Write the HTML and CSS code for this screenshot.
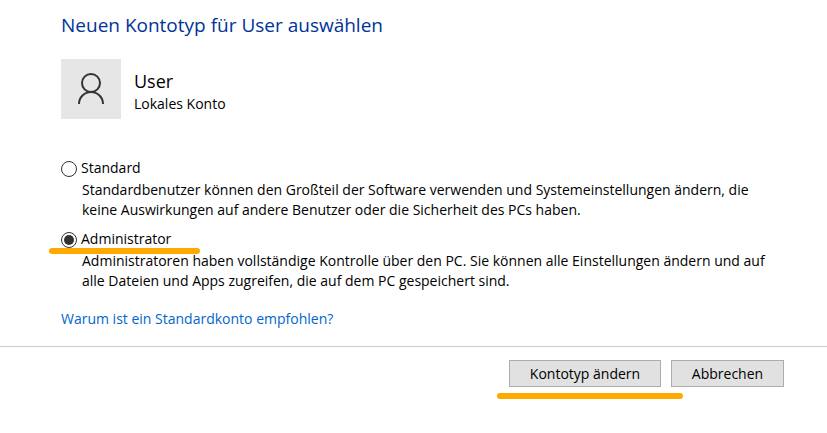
FILE: index.html
```html
<!DOCTYPE html>
<html lang="de">
<head>
    <meta charset="UTF-8">
    <meta name="viewport" content="width=device-width, initial-scale=1.0">
    <title>Kontotyp ändern</title>
    <link rel="stylesheet" href="styles.css">
</head>
<body>
    <form class="account-form">
        <main class="content">
            <h1 class="title">Neuen Kontotyp für User auswählen</h1>
            <div class="user">
                <div class="avatar">
                    <svg width="60" height="60" viewBox="0 0 60 60" fill="none" stroke="#333" stroke-width="2" aria-hidden="true">
                        <circle cx="30" cy="24" r="9"/>
                        <path d="M18 45a12 12 0 0 1 24 0"/>
                    </svg>
                </div>
                <div class="user-info">
                    <div class="user-name">User</div>
                    <div class="user-type">Lokales Konto</div>
                </div>
            </div>
            <div class="option">
                <input class="radio" type="radio" name="type" id="standard">
                <label class="option-label" for="standard">Standard</label>
                <p class="option-text">Standardbenutzer können den Großteil der Software verwenden und Systemeinstellungen ändern, die keine Auswirkungen auf andere Benutzer oder die Sicherheit des PCs haben.</p>
            </div>
            <div class="option marked">
                <input class="radio" type="radio" name="type" id="admin" checked>
                <label class="option-label" for="admin">Administrator</label>
                <p class="option-text">Administratoren haben vollständige Kontrolle über den PC. Sie können alle Einstellungen ändern und auf alle Dateien und Apps zugreifen, die auf dem PC gespeichert sind.</p>
            </div>
            <a class="help" href="#">Warum ist ein Standardkonto empfohlen?</a>
        </main>
        <footer class="footer">
            <div class="marked">
                <button class="btn btn-change" type="button">Kontotyp ändern</button>
            </div>
            <button class="btn btn-cancel" type="button">Abbrechen</button>
        </footer>
    </form>
</body>
</html>
```
FILE: styles.css
```css
*{
    margin: 0;
    padding: 0;
    box-sizing: border-box;
}
body{
    font: 14px/20px "Segoe UI", "Open Sans", "Noto Sans", sans-serif;
    color: #000;
    background-color: #fff;
}
.content{
    padding: 12px 48px 17px 61px;
}
.title{
    font-size: 19px;
    line-height: 26px;
    font-weight: normal;
    color: #003399;
}
.user{
    display: flex;
    gap: 13px;
    margin: 21px 0 39px;
}
.avatar{
    width: 60px;
    height: 60px;
    background-color: #e6e6e6;
}
.avatar svg{
    display: block;
}
.user-info{
    padding-top: 10px;
}
.user-name{
    font-size: 18px;
    line-height: 25px;
}
/* radio on the left, label and text share the second column */
.option{
    display: grid;
    grid-template-columns: 16px 1fr;
    column-gap: 4px;
    row-gap: 2px;
    margin-bottom: 9px;
}
.radio{
    appearance: none;
    width: 16px;
    height: 16px;
    margin-top: 3px;
    padding: 2px;
    border: 1px solid #333;
    border-radius: 50%;
}
.radio:checked{
    background-color: #333;
    background-clip: content-box;
}
.option-label{
    justify-self: start;
}
.option-text{
    grid-column: 2;
    padding-left: 1px;
}
.help{
    display: table;
    margin-top: 18px;
    color: #0066cc;
    text-decoration: none;
}
.footer{
    display: flex;
    justify-content: flex-end;
    gap: 10px;
    padding: 13px 43px 46px;
    border-top: 1px solid #ccc;
}
.btn{
    display: block;
    height: 27px;
    border: 1px solid #adadad;
    background-color: #e1e1e1;
    font: inherit;
    color: inherit;
}
.btn-change{
    width: 152px;
}
.btn-cancel{
    width: 113px;
}
/* orange marker line */
.marked{
    position: relative;
}
.marked::after{
    content: "";
    position: absolute;
    height: 6px;
    border-radius: 3px;
    background-color: #ffa800;
}
.option.marked::after{
    top: 19px;
    left: -12px;
    width: 151px;
}
.footer .marked::after{
    top: 33px;
    left: -12px;
    width: 186px;
}
```
